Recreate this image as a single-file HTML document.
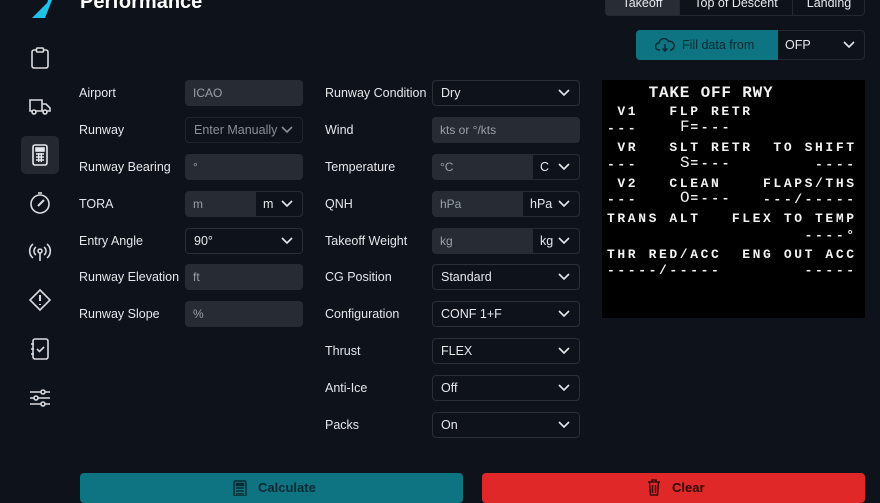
<!DOCTYPE html>
<html><head><meta charset="utf-8"><style>
*{box-sizing:border-box;margin:0;padding:0}
body{width:880px;height:495px;overflow:hidden;background:#0e121a;font-family:"Liberation Sans",sans-serif;color:#e6e8eb;position:relative}
.a{position:absolute}
.lbl{position:absolute;font-size:12.5px;color:#e4e6ea;line-height:26px}
.in{position:absolute;height:26px;border-radius:4px;background:#262b34;font-size:12px;color:#9aa0a8;line-height:26px;padding-left:8px}
.sel{position:absolute;height:26px;border-radius:4px;background:#0e121a;border:1px solid #2a2f38;font-size:12.5px;color:#e6e8eb;line-height:24px;padding-left:8px}
.chev{position:absolute;right:9px;top:8px;width:12px;height:8px}
.unit{position:absolute;top:0;right:0;height:26px;background:#0e121a;border:1px solid #262b34;border-radius:0 4px 4px 0;color:#e6e8eb;font-size:12.5px;line-height:24px;padding-left:7px}
.ico{position:absolute;left:28px;width:24px;height:24px}
.m{position:absolute;left:607px;font-family:"Liberation Mono",monospace;font-size:13px;letter-spacing:2.6px;color:#f2f2f2;white-space:pre;font-weight:bold;line-height:14px}
.b{font-size:16px;font-weight:normal;letter-spacing:0.8px}
</style></head><body>
<svg class="a" style="left:28px;top:0" width="26" height="20"><polygon points="10,18 24,0 20,0 18,8 4,18" fill="#1fc3ea"/><polygon points="4,18 22,0 24,0 17,18" fill="#1fc3ea"/></svg>
<div class="a" style="left:21px;top:136px;width:38px;height:38px;background:#232831;border-radius:5px"></div>
<svg class="ico" style="top:46px" viewBox="0 0 24 24" fill="none" stroke="#d8dade" stroke-width="1.6"><rect x="4" y="4" width="16" height="18" rx="2"/><rect x="8.5" y="2" width="7" height="4" rx="1" fill="#0e121a"/></svg>
<svg class="ico" style="top:94px" viewBox="0 0 24 24" fill="none" stroke="#d8dade" stroke-width="1.6"><path d="M2 6h12v11H2zM14 10h4l4 4v3h-8"/><circle cx="6" cy="18" r="2" fill="#0e121a"/><circle cx="17" cy="18" r="2" fill="#0e121a"/></svg>
<svg class="ico" style="top:143px" viewBox="0 0 24 24" fill="none" stroke="#e6e8eb" stroke-width="1.6"><rect x="5" y="2" width="14" height="20" rx="2"/><rect x="8" y="5" width="8" height="3" fill="#e6e8eb"/><path d="M8 11h8M8 14h8M8 17h8M10.7 10v9M13.3 10v9" stroke-width="1.4"/></svg>
<svg class="ico" style="top:191px" viewBox="0 0 24 24" fill="none" stroke="#d8dade" stroke-width="1.6"><circle cx="12" cy="13" r="9"/><path d="M10 2h4"/><path d="M16 9l-6 6" stroke-width="2"/></svg>
<svg class="ico" style="top:240px" viewBox="0 0 24 24" fill="none" stroke="#d8dade" stroke-width="1.6"><circle cx="12" cy="11" r="2"/><path d="M12 13v8M8 7a5 5 0 0 0 0 8M16 7a5 5 0 0 1 0 8M5 4a9 9 0 0 0 0 14M19 4a9 9 0 0 1 0 14"/></svg>
<svg class="ico" style="top:288px" viewBox="0 0 24 24" fill="none" stroke="#d8dade" stroke-width="1.6"><path d="M12 2l10 10-10 10L2 12z"/><path d="M12 7v6M12 16v1" stroke-width="2"/></svg>
<svg class="ico" style="top:337px" viewBox="0 0 24 24" fill="none" stroke="#d8dade" stroke-width="1.6"><rect x="5" y="2" width="15" height="20" rx="2"/><path d="M3 7h3M3 12h3M3 17h3M9 12l2.5 2.5L16 10"/></svg>
<svg class="ico" style="top:386px" viewBox="0 0 24 24" fill="none" stroke="#d8dade" stroke-width="1.6"><path d="M2 6h20M2 12h20M2 18h20"/><circle cx="15" cy="6" r="2" fill="#0e121a"/><circle cx="8" cy="12" r="2" fill="#0e121a"/><circle cx="15" cy="18" r="2" fill="#0e121a"/></svg>

<div class="a" style="left:80px;top:-9px;font-size:20px;font-weight:bold;color:#fff">Performance</div>

<div class="a" style="left:605px;top:-6px;width:260px;height:22px;border:1px solid #232831;border-radius:4px;background:#0e121a;font-size:12.5px;color:#e6e8eb">
<div class="a" style="left:0;top:0;width:73px;height:20px;background:#272c35;text-align:center;line-height:16px">Takeoff</div>
<div class="a" style="left:73px;top:0;width:114px;height:20px;border-left:1px solid #232831;border-right:1px solid #232831;text-align:center;line-height:16px">Top of Descent</div>
<div class="a" style="left:187px;top:0;width:72px;height:20px;text-align:center;line-height:16px">Landing</div>
</div>
<div class="a" style="left:636px;top:30px;width:229px;height:30px;border:1px solid #232831;border-radius:4px;background:#0e121a"></div>
<div class="a" style="left:636px;top:30px;width:142px;height:30px;background:#0e7482;border-radius:4px 0 0 4px;font-size:12.5px;color:#0b2a33;line-height:30px;padding-left:46px">Fill data from</div>
<svg class="a" style="left:655px;top:37px" width="20" height="16" viewBox="0 0 20 16" fill="none" stroke="#0b2a33" stroke-width="1.5"><path d="M5 13H4a3.5 3.5 0 0 1 0-7 5 5 0 0 1 9.5-1.5A4 4 0 0 1 16 13h-1"/><path d="M10 7v7M7.5 11.5L10 14l2.5-2.5"/></svg>
<div class="a" style="left:785px;top:30px;font-size:12.5px;line-height:30px;color:#e6e8eb">OFP</div>
<svg class="a" style="left:843px;top:41px" width="12" height="8"><path d="M1 1l5 5 5-5" stroke="#e6e8eb" stroke-width="1.6" fill="none"/></svg>

<div class="lbl" style="left:79px;top:80px">Airport</div><div class="in" style="left:185px;top:80px;width:118px">ICAO</div>
<div class="lbl" style="left:79px;top:117px">Runway</div><div class="sel" style="left:185px;top:117px;width:118px;color:#8a9098;border-color:#20252d">Enter Manually<svg class="chev" viewBox="0 0 12 8"><path d="M1 1l5 5 5-5" stroke="#8a9098" stroke-width="1.6" fill="none"/></svg></div>
<div class="lbl" style="left:79px;top:154px">Runway Bearing</div><div class="in" style="left:185px;top:154px;width:118px">°</div>
<div class="lbl" style="left:79px;top:191px">TORA</div><div class="in" style="left:185px;top:191px;width:118px">m<div class="unit" style="width:48px">m<svg class="chev" viewBox="0 0 12 8"><path d="M1 1l5 5 5-5" stroke="#e6e8eb" stroke-width="1.6" fill="none"/></svg></div></div>
<div class="lbl" style="left:79px;top:228px">Entry Angle</div><div class="sel" style="left:185px;top:228px;width:118px">90°<svg class="chev" viewBox="0 0 12 8"><path d="M1 1l5 5 5-5" stroke="#e6e8eb" stroke-width="1.6" fill="none"/></svg></div>
<div class="lbl" style="left:79px;top:264px">Runway Elevation</div><div class="in" style="left:185px;top:264px;width:118px">ft</div>
<div class="lbl" style="left:79px;top:301px">Runway Slope</div><div class="in" style="left:185px;top:301px;width:118px">%</div>

<div class="lbl" style="left:325px;top:80px">Runway Condition</div><div class="sel" style="left:432px;top:80px;width:148px">Dry<svg class="chev" viewBox="0 0 12 8"><path d="M1 1l5 5 5-5" stroke="#e6e8eb" stroke-width="1.6" fill="none"/></svg></div>
<div class="lbl" style="left:325px;top:117px">Wind</div><div class="in" style="left:432px;top:117px;width:148px">kts or °/kts</div>
<div class="lbl" style="left:325px;top:154px">Temperature</div><div class="in" style="left:432px;top:154px;width:148px">°C<div class="unit" style="width:48px">C<svg class="chev" viewBox="0 0 12 8"><path d="M1 1l5 5 5-5" stroke="#e6e8eb" stroke-width="1.6" fill="none"/></svg></div></div>
<div class="lbl" style="left:325px;top:191px">QNH</div><div class="in" style="left:432px;top:191px;width:148px">hPa<div class="unit" style="width:58px">hPa<svg class="chev" viewBox="0 0 12 8"><path d="M1 1l5 5 5-5" stroke="#e6e8eb" stroke-width="1.6" fill="none"/></svg></div></div>
<div class="lbl" style="left:325px;top:228px">Takeoff Weight</div><div class="in" style="left:432px;top:228px;width:148px">kg<div class="unit" style="width:48px">kg<svg class="chev" viewBox="0 0 12 8"><path d="M1 1l5 5 5-5" stroke="#e6e8eb" stroke-width="1.6" fill="none"/></svg></div></div>
<div class="lbl" style="left:325px;top:264px">CG Position</div><div class="sel" style="left:432px;top:264px;width:148px">Standard<svg class="chev" viewBox="0 0 12 8"><path d="M1 1l5 5 5-5" stroke="#e6e8eb" stroke-width="1.6" fill="none"/></svg></div>
<div class="lbl" style="left:325px;top:301px">Configuration</div><div class="sel" style="left:432px;top:301px;width:148px">CONF 1+F<svg class="chev" viewBox="0 0 12 8"><path d="M1 1l5 5 5-5" stroke="#e6e8eb" stroke-width="1.6" fill="none"/></svg></div>
<div class="lbl" style="left:325px;top:338px">Thrust</div><div class="sel" style="left:432px;top:338px;width:148px">FLEX<svg class="chev" viewBox="0 0 12 8"><path d="M1 1l5 5 5-5" stroke="#e6e8eb" stroke-width="1.6" fill="none"/></svg></div>
<div class="lbl" style="left:325px;top:375px">Anti-Ice</div><div class="sel" style="left:432px;top:375px;width:148px">Off<svg class="chev" viewBox="0 0 12 8"><path d="M1 1l5 5 5-5" stroke="#e6e8eb" stroke-width="1.6" fill="none"/></svg></div>
<div class="lbl" style="left:325px;top:412px">Packs</div><div class="sel" style="left:432px;top:412px;width:148px">On<svg class="chev" viewBox="0 0 12 8"><path d="M1 1l5 5 5-5" stroke="#e6e8eb" stroke-width="1.6" fill="none"/></svg></div>

<div class="a" style="left:602px;top:80px;width:263px;height:238px;background:#000"></div>
<div class="m" style="top:86px;font-size:16px;letter-spacing:0.8px">    TAKE OFF RWY</div>
<div class="m" style="top:105px"> V1   FLP RETR</div>
<div class="m" style="top:122px">---</div><div class="m" style="top:120px;left:680px"><span class="b">F</span>=---</div>
<div class="m" style="top:141px"> VR   SLT RETR  TO SHIFT</div>
<div class="m" style="top:158px">---                 ----</div><div class="m" style="top:156px;left:680px"><span class="b">S</span>=---</div>
<div class="m" style="top:177px"> V2   CLEAN    FLAPS/THS</div>
<div class="m" style="top:193px">---            ---/-----</div><div class="m" style="top:191px;left:680px"><span class="b">O</span>=---</div>
<div class="m" style="top:212px">TRANS ALT   FLEX TO TEMP</div>
<div class="m" style="top:229px">                   ----°</div>
<div class="m" style="top:248px">THR RED/ACC  ENG OUT ACC</div>
<div class="m" style="top:264px">-----/-----        -----</div>

<div class="a" style="left:80px;top:473px;width:383px;height:30px;background:#0e7482;border-radius:4px;font-size:13px;font-weight:bold;color:#0b2a33;line-height:30px;padding-left:178px">Calculate</div>
<svg class="a" style="left:233px;top:480px" width="14" height="16" viewBox="0 0 14 16" fill="none" stroke="#0b2a33" stroke-width="1.5"><rect x="1" y="1" width="12" height="15" rx="1.5"/><rect x="3.5" y="3.5" width="7" height="2" fill="#0b2a33"/><path d="M3 8h8M3 11h8M3 14h8"/></svg>
<div class="a" style="left:482px;top:473px;width:383px;height:30px;background:#e02828;border-radius:4px;font-size:13px;font-weight:bold;color:#2a0a0a;line-height:30px;padding-left:190px">Clear</div>
<svg class="a" style="left:647px;top:479px" width="14" height="17" viewBox="0 0 14 17" fill="none" stroke="#3a0b0b" stroke-width="1.5"><path d="M1 3h12M5 3V1h4v2M2.5 3l1 13h7l1-13M5.5 6v8M8.5 6v8"/></svg>
</body></html>
